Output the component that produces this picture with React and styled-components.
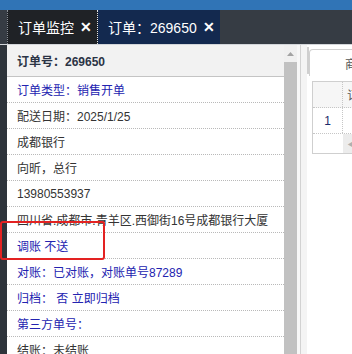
import React from "react";
import styled, { createGlobalStyle } from "styled-components";

const GlobalStyle = createGlobalStyle`
  html, body {
    margin: 0;
    padding: 0;
    background: #ffffff;
  }
  body {
    width: 352px;
    height: 354px;
    overflow: hidden;
    font-family: "Liberation Sans", "Noto Sans CJK SC", sans-serif;
  }
`;

const Page = styled.div`
  display: flex;
  flex-direction: column;
  width: 352px;
  height: 354px;
  overflow: hidden;
`;

const TopStrip = styled.div`
  height: 10px;
  flex-shrink: 0;
  background: #3074b6;
`;

const TabBar = styled.div`
  display: flex;
  height: 34px;
  flex-shrink: 0;
  background: #363c44;
  padding-left: 7px;
`;

const Tab = styled.div`
  display: flex;
  align-items: center;
  gap: 6px;
  padding: 0 5px 0 10px;
  background: ${(p) => (p.$active ? "#13294f" : "#1f2226")};
  border-left: ${(p) => (p.$active ? "none" : "1px dotted #8a8f96")};
  border-right: ${(p) => (p.$active ? "none" : "1px dotted #e6e6e6")};
  color: #ffffff;
  font-size: 14px;
  white-space: nowrap;
`;

const Close = styled.span`
  font-size: 14px;
  font-weight: bold;
  line-height: 1;
`;

const TabRule = styled.div`
  height: 1px;
  flex-shrink: 0;
  background: #d3d6da;
`;

const Body = styled.div`
  display: flex;
  flex: 1;
  min-height: 0;
`;

const SideStrip = styled.div`
  width: 7px;
  flex-shrink: 0;
  background: #2e343b;
`;

const LeftPanel = styled.div`
  width: 277px;
  flex-shrink: 0;
  display: flex;
  flex-direction: column;
`;

const Header = styled.div`
  height: 31px;
  flex-shrink: 0;
  display: flex;
  align-items: center;
  padding-left: 10px;
  background: #f2f2f2;
  border-bottom: 1px solid #c4c4c4;
  color: #2b3445;
  font-size: 12px;
  font-weight: bold;
`;

const Row = styled.div`
  position: relative;
  height: 25px;
  flex-shrink: 0;
  display: flex;
  align-items: center;
  padding-left: 10px;
  border-bottom: 1px dotted #b9b9b9;
  color: ${(p) => (p.$blue ? "#2323b0" : "#333333")};
  font-size: 12px;
  white-space: nowrap;
`;

const Mark = styled.div`
  position: absolute;
  left: -7px;
  top: -12px;
  width: 101px;
  height: 35px;
  border: 2px solid #e32222;
  border-radius: 3px;
  pointer-events: none;
`;

const Scrollbar = styled.div`
  width: 13px;
  flex-shrink: 0;
  display: flex;
  flex-direction: column;
  background: #f0f0f0;
`;

const ScrollArrow = styled.div`
  height: 17px;
  display: flex;
  align-items: center;
  justify-content: center;
`;

const Thumb = styled.div`
  flex: 1;
  background: #c1c1c1;
`;

const Splitter = styled.div`
  width: 10px;
  flex-shrink: 0;
  display: flex;
  background: #f4f4f4;
  border-left: 3px solid #f7f7f7;
  box-sizing: border-box;
  & > div {
    width: 1px;
    background: #d2d2d2;
  }
`;

const RightPanel = styled.div`
  flex: 1;
  display: flex;
  flex-direction: column;
  padding-top: 2px;
  background: #ffffff;
  overflow: hidden;
`;

const RightTabs = styled.div`
  display: flex;
  align-items: flex-start;
  height: 29px;
`;

const TabScroller = styled.div`
  width: 3px;
  height: 26px;
  background: #efefef;
  border: 1px solid #cfcfcf;
  border-top: 0;
  border-radius: 0 0 3px 3px;
`;

const RightTab = styled.div`
  margin-top: 2px;
  height: 27px;
  width: 80px;
  flex-shrink: 0;
  border: 1px solid #d0d0d0;
  border-bottom: 0;
  border-radius: 4px 4px 0 0;
  padding-left: 35px;
  padding-top: 5px;
  box-sizing: border-box;
  color: #555555;
  font-size: 12px;
  white-space: nowrap;
`;

const Grid = styled.div`
  margin: 5px 0 0 5px;
  border: 1px solid #cfcfcf;
  border-right: 0;
  width: 120px;
`;

const GridRow = styled.div`
  display: grid;
  grid-template-columns: 30px 1fr;
  height: ${(p) => p.$h}px;
  border-bottom: ${(p) => (p.$last ? "none" : "1px dotted #c6c6c6")};
  background: ${(p) => (p.$head ? "#f6f6f6" : "#ffffff")};
`;

const Cell = styled.div`
  display: flex;
  align-items: center;
  justify-content: ${(p) => (p.$center ? "center" : "flex-start")};
  padding-left: ${(p) => (p.$center ? 0 : 4)}px;
  border-right: ${(p) => (p.$first ? "1px dotted #c6c6c6" : "none")};
  background: ${(p) => p.$bg || "transparent"};
  color: ${(p) => p.$color || "#555555"};
  font-size: 12px;
`;

const rows = [
  { text: "订单类型：销售开单", blue: true },
  { text: "配送日期：2025/1/25" },
  { text: "成都银行" },
  { text: "向昕，总行" },
  { text: "13980553937" },
  { text: "四川省.成都市.青羊区.西御街16号成都银行大厦" },
  { text: "调账 不送", blue: true, marked: true },
  { text: "对账：已对账，对账单号87289", blue: true },
  { text: "归档：  否 立即归档", blue: true },
  { text: "第三方单号：", blue: true },
  { text: "结账：未结账" },
];

export default function App() {
  return (
    <Page>
      <GlobalStyle />
      <TopStrip />
      <TabBar>
        <Tab>
          订单监控<Close>✕</Close>
        </Tab>
        <Tab $active>
          订单：269650<Close>✕</Close>
        </Tab>
      </TabBar>
      <TabRule />
      <Body>
        <SideStrip />
        <LeftPanel>
          <Header>订单号：269650</Header>
          {rows.map((r, i) => (
            <Row key={i} $blue={r.blue}>
              {r.text}
              {r.marked && <Mark />}
            </Row>
          ))}
        </LeftPanel>
        <Scrollbar>
          <ScrollArrow>
            <svg width="7" height="4" viewBox="0 0 7 4">
              <path d="M0 4 L3.5 0 L7 4 Z" fill="#a3a3a3" />
            </svg>
          </ScrollArrow>
          <Thumb />
        </Scrollbar>
        <Splitter>
          <div />
        </Splitter>
        <RightPanel>
          <RightTabs>
            <TabScroller />
            <RightTab>商品明细</RightTab>
          </RightTabs>
          <Grid>
            <GridRow $h={25} $head>
              <Cell $first />
              <Cell>订单</Cell>
            </GridRow>
            <GridRow $h={25}>
              <Cell $first $center $color="#1b2b6b">
                1
              </Cell>
              <Cell />
            </GridRow>
            <GridRow $h={19} $last>
              <Cell />
              <Cell $bg="#ececec" $color="#b0b0b0">
                ◀
              </Cell>
            </GridRow>
          </Grid>
        </RightPanel>
      </Body>
    </Page>
  );
}
